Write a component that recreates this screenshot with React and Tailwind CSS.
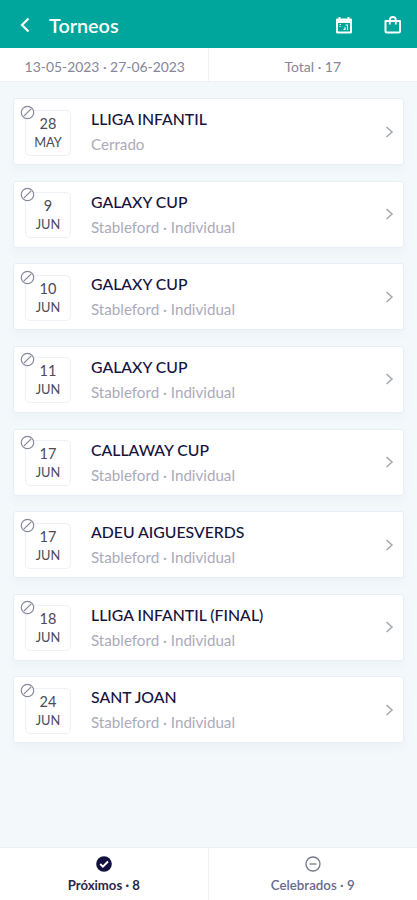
import React from "react";

const tournaments = [
  { day: "28", month: "MAY", title: "LLIGA INFANTIL", detail: "Cerrado" },
  { day: "9", month: "JUN", title: "GALAXY CUP", detail: "Stableford · Individual" },
  { day: "10", month: "JUN", title: "GALAXY CUP", detail: "Stableford · Individual" },
  { day: "11", month: "JUN", title: "GALAXY CUP", detail: "Stableford · Individual" },
  { day: "17", month: "JUN", title: "CALLAWAY CUP", detail: "Stableford · Individual" },
  { day: "17", month: "JUN", title: "ADEU AIGUESVERDS", detail: "Stableford · Individual" },
  { day: "18", month: "JUN", title: "LLIGA INFANTIL (FINAL)", detail: "Stableford · Individual" },
  { day: "24", month: "JUN", title: "SANT JOAN", detail: "Stableford · Individual" },
];

function Header() {
  return (
    <header className="flex h-[48px] shrink-0 items-center bg-[#00a59b] pt-px pl-[19px] pr-[14px] text-white">
      <svg className="h-[18px] w-3" viewBox="0 0 12 18" fill="none" stroke="currentColor" strokeWidth="2.200">
        <path d="M9.500 2.500 3 9l6.500 6.500" />
      </svg>
      <h1 className="ml-[18px] flex-1 text-[19.800px] leading-6 font-semibold">Torneos</h1>
      <svg className="mr-[30px] h-[18px] w-[18px]" viewBox="0 0 18 18">
        <path
          fill="currentColor"
          fillRule="evenodd"
          d="M3.500 1h2v1.500h7V1h2v1.500H16q1 0 1 1V16q0 1.500-1.500 1.500h-13Q1 17.500 1 16V3.500q0-1 1-1h1.500zM3 7v8.500h12V7z"
        />
        <path d="M4.500 8.500h1.500M5 10v1M8.500 13.500h1M10.500 9h2v5M10 11v3" stroke="currentColor" strokeWidth="1.100" fill="none" />
      </svg>
      <svg className="h-5 w-5" viewBox="0 0 20 20" fill="none" stroke="currentColor" strokeWidth="2" strokeLinejoin="round">
        <path d="M2.500 6h14.500V16q0 1.500-1.500 1.500H4q-1.500 0-1.500-1.500z" />
        <path d="M6.800 9.500V5q0-3 3-3t3 3v4.500" strokeWidth="1.800" />
      </svg>
    </header>
  );
}

function Card({ item }) {
  return (
    <li className="flex h-[67px] shrink-0 items-center rounded-[3px] border border-[#e8eef6] bg-white shadow-[0_5px_9px_rgba(60,100,110,0.04)]">
      <div className="relative ml-[11px] mt-[2px] flex h-[46px] w-[46px] flex-col items-center rounded-[5px] border border-[#edf0f6] pt-[3px] text-[#4a4a59]">
        <span className="text-[14.500px] leading-[19px]">{item.day}</span>
        <span className="text-[12.800px] leading-[19px]">{item.month}</span>
        <svg className="absolute -top-[6px] -left-[6px] h-[15px] w-[15px]" viewBox="0 0 15 15" fill="white" stroke="#85879b" strokeWidth="1.200">
          <circle cx="7.500" cy="7.500" r="6.200" />
          <path d="m3.800 11.200 7.400-7.400" />
        </svg>
      </div>
      <div className="ml-[20px] flex-1">
        <div className="text-[15.800px] leading-[25px] font-medium text-[#16133e]">{item.title}</div>
        <div className="pt-px text-[15.150px] leading-[25px] text-[#a9abbc]">{item.detail}</div>
      </div>
      <svg className="mr-[9px] h-3 w-[9px]" viewBox="0 0 9 12" fill="none" stroke="#a5a8b2" strokeWidth="1.500">
        <path d="m1.500 1 5.500 5-5.500 5" />
      </svg>
    </li>
  );
}

export default function App() {
  return (
    <div className="flex h-[900px] w-[417px] flex-col overflow-hidden bg-[#f3f8fb] font-['Lato',sans-serif]">
      <Header />
      <div className="grid h-[34px] shrink-0 grid-cols-2 grid-rows-[33px] border-b border-[#eef2f7] bg-white text-center text-[14px] leading-[38px] text-[#85869b]">
        <div className="border-r border-[#eff1f6] pl-[2px] text-[13.900px]">13-05-2023 · 27-06-2023</div>
        <div>Total · 17</div>
      </div>
      <ul className="flex flex-1 flex-col gap-[15.650px] px-[13px] pt-4">
        {tournaments.map((item, i) => (
          <Card key={i} item={item} />
        ))}
      </ul>
      <nav className="grid h-[53px] shrink-0 grid-cols-2 border-t border-[#edf1f5] bg-white text-[13px]">
        <div className="flex flex-col items-center border-r border-[#eff1f6] pt-2 text-[13.150px] font-bold text-[#2a2848]">
          <svg className="h-4 w-4" viewBox="0 0 16 16">
            <circle cx="8" cy="8" r="7.800" fill="#12113e" />
            <path d="m4.200 8 2.700 2.700L12 5.500" fill="none" stroke="white" strokeWidth="2" />
          </svg>
          <span className="mt-1 leading-[18px]">Próximos · 8</span>
        </div>
        <div className="flex flex-col items-center pt-2 text-[13.300px] font-semibold text-[#68698c]">
          <svg className="h-4 w-4" viewBox="0 0 16 16" fill="none" stroke="#77788a" strokeWidth="1.300">
            <circle cx="8" cy="8" r="7" />
            <path d="M4.500 8h7" />
          </svg>
          <span className="mt-1 leading-[18px]">Celebrados · 9</span>
        </div>
      </nav>
    </div>
  );
}
